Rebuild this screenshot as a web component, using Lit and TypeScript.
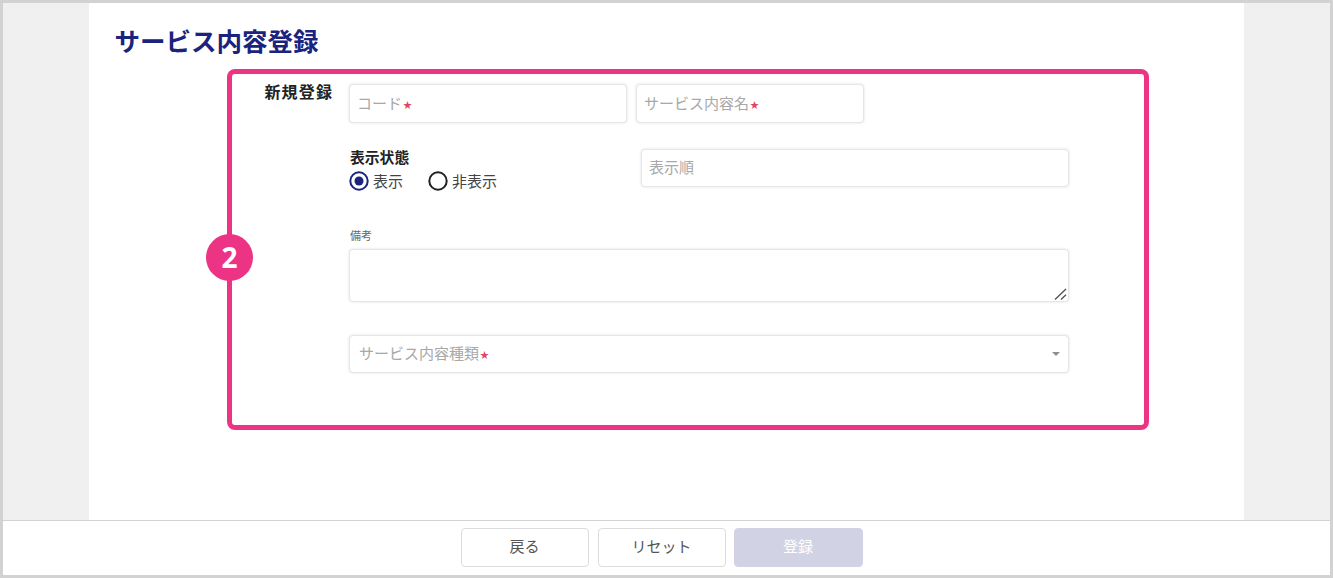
import { LitElement, html, css } from "lit";
import { customElement } from "lit/decorators.js";

@customElement("app-root")
export class AppRoot extends LitElement {
  static styles = css`
    :host {
      display: flex;
      flex-direction: column;
      position: relative;
      width: 1333px;
      height: 578px;
      box-sizing: border-box;
      border: 3px solid #d2d2d2;
      background: #f0f0f0;
      font-family: "Noto Sans CJK JP", "Noto Sans", sans-serif;
      overflow: hidden;
    }
    .main { flex: 1; padding: 0 86px; min-height: 0; display: flex; }
    .sheet { flex: 1; background: #fff; padding: 20px 0 0 25.5px; }
    h1 {
      margin: 0;
      height: 34px;
      line-height: 34px;
      font-size: 25.5px;
      font-weight: 700;
      color: #1a237e;
    }
    .form {
      display: grid;
      grid-template-columns: 217.5px 720px;
      column-gap: 17px;
      margin-top: 27px;
    }
    .section-label {
      font-size: 16px;
      font-weight: 700;
      line-height: 18px;
      letter-spacing: 1.2px;
      margin-right: -1.2px;
      color: #222;
      text-align: right;
      margin-top: -2px;
    }
    .fields { display: flex; flex-direction: column; }
    .field {
      box-sizing: border-box;
      border: 1px solid #e6e6e6;
      border-radius: 4px;
      box-shadow: 0 0 3px rgba(0, 0, 0, 0.12);
      background: #fff;
      height: 38px;
      display: flex;
      align-items: center;
      padding: 0 7px 3px;
      font-size: 15px;
      color: #a8a8a8;
      white-space: nowrap;
    }
    .star { color: #e0455f; font-size: 9px; line-height: 9px; margin-left: 1px; margin-top: 4px; }
    .row1 { display: flex; gap: 9px; }
    .row1 .field { height: 39px; }
    .code { width: 278px; }
    .name { width: 227.5px; }
    .row2 { display: flex; margin-top: 26px; height: 62px; }
    .status { width: 292px; padding-left: 1px; margin-right: -1px; }
    .status-label {
      font-size: 14.8px;
      font-weight: 700;
      line-height: 18px;
      color: #222;
      margin-top: -1px;
    }
    .radios { display: flex; align-items: center; margin-top: 5px; margin-left: -1px; }
    .radio { display: flex; align-items: center; font-size: 15px; color: #444; line-height: 20px; }
    .radio svg { display: block; margin-right: 4px; }
    .radio + .radio { margin-left: 25px; }
    .order { width: 428px; }
    .note-label {
      margin-top: 16px;
      padding-left: 1px;
      font-size: 11px;
      line-height: 16px;
      color: #666;
      height: 16px;
    }
    .note-wrap { position: relative; width: 720px; height: 53px; margin-top: 6px; }
    textarea {
      display: block;
      box-sizing: border-box;
      width: 100%;
      height: 100%;
      border: 1px solid #e6e6e6;
      border-radius: 4px;
      box-shadow: 0 0 3px rgba(0, 0, 0, 0.12);
      background: #fff;
      resize: none;
      outline: none;
      padding: 8px;
    }
    .resizer { position: absolute; right: 2px; bottom: 2px; display: block; }
    .select {
      width: 720px;
      margin-top: 33px;
      justify-content: space-between;
      padding: 0 8px 3px 9px;
    }
    .select-text { display: flex; align-items: center; }
    .caret {
      width: 0;
      height: 0;
      margin-top: 3px;
      border-left: 4px solid transparent;
      border-right: 4px solid transparent;
      border-top: 4px solid #8f8f8f;
    }
    footer {
      box-sizing: border-box;
      height: 55px;
      background: #fff;
      border-top: 1px solid #d2d2d2;
      display: flex;
      justify-content: center;
      gap: 9px;
      padding: 7px 10px 0 0;
    }
    button {
      box-sizing: border-box;
      width: 128px;
      height: 39px;
      border: 1px solid #dcdcdc;
      border-radius: 4px;
      background: #fff;
      color: #555;
      font-family: inherit;
      font-size: 15px;
      padding: 0 0 5px;
    }
    button.primary { width: 129px; background: #d1d3e5; border-color: #d1d3e5; color: #fff; margin-left: -1px; }
    .callout {
      position: absolute;
      left: 224px;
      top: 66px;
      width: 922px;
      height: 361px;
      box-sizing: border-box;
      border: 5px solid #ec3384;
      border-radius: 8px;
      pointer-events: none;
    }
    .badge {
      position: absolute;
      left: 203px;
      top: 231px;
      width: 47px;
      height: 47px;
      border-radius: 50%;
      background: #ec3384;
      color: #fff;
      font-family: "Open Sans", "Noto Sans", sans-serif;
      font-weight: 700;
      font-size: 28px;
      line-height: 47px;
      text-align: center;
    }
  `;

  render() {
    return html`
      <div class="main">
        <div class="sheet">
          <h1>サービス内容登録</h1>
          <div class="form">
            <div class="section-label">新規登録</div>
            <div class="fields">
              <div class="row1">
                <div class="field code">コード<span class="star">★</span></div>
                <div class="field name">サービス内容名<span class="star">★</span></div>
              </div>
              <div class="row2">
                <div class="status">
                  <div class="status-label">表示状態</div>
                  <div class="radios">
                    <div class="radio">
                      <svg width="20" height="20" viewBox="0 0 20 20">
                        <circle cx="10" cy="10" r="8.7" fill="none" stroke="#1a237e" stroke-width="2" />
                        <circle cx="10" cy="10" r="4.5" fill="#1a237e" />
                      </svg>
                      表示
                    </div>
                    <div class="radio">
                      <svg width="20" height="20" viewBox="0 0 20 20">
                        <circle cx="10" cy="10" r="8.7" fill="none" stroke="#222" stroke-width="2" />
                      </svg>
                      非表示
                    </div>
                  </div>
                </div>
                <div class="field order">表示順</div>
              </div>
              <div class="note-label">備考</div>
              <div class="note-wrap">
                <textarea></textarea>
                <svg class="resizer" width="13" height="12" viewBox="0 0 13 12">
                  <path d="M1 11.5 L12 1 M7 11.5 L12 6.8" stroke="#555" stroke-width="1.4" fill="none" />
                </svg>
              </div>
              <div class="field select">
                <span class="select-text">サービス内容種類<span class="star">★</span></span>
                <span class="caret"></span>
              </div>
            </div>
          </div>
        </div>
      </div>
      <footer>
        <button>戻る</button>
        <button>リセット</button>
        <button class="primary">登録</button>
      </footer>
      <div class="callout"></div>
      <div class="badge">2</div>
    `;
  }
}
